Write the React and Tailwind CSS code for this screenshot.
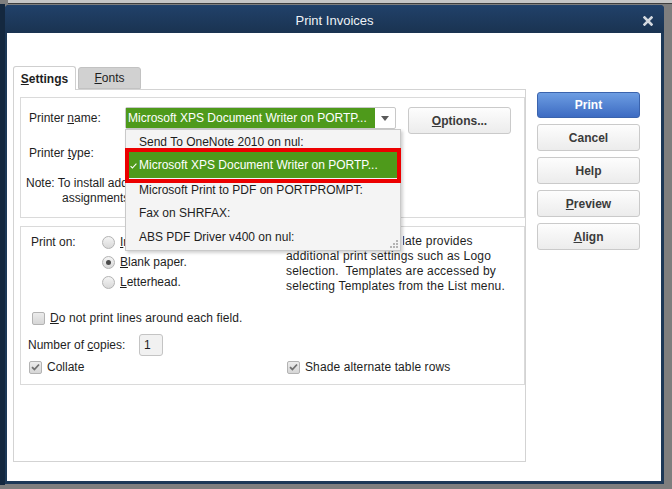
import React from "react";

function Radio({ checked, label, u, clip }) {
	return (
		<div className="flex items-center h-[20px]">
			<span className="w-[13px] h-[13px] rounded-full border border-[#b3b3b3] bg-gradient-to-b from-[#f4f4f4] to-[#d9d9d9] flex items-center justify-center">
				{checked && <span className="w-[5px] h-[5px] rounded-full bg-[#4a4a4a]" />}
			</span>
			<span className={clip ? "ml-[5px] w-[6px] overflow-hidden whitespace-nowrap" : "ml-[5px]"}>
				<span className="underline">{u}</span>
				{label}
			</span>
		</div>
	);
}

function Check({ checked }) {
	return (
		<span className="w-[13px] h-[13px] rounded-[2px] border border-[#b3b3b3] bg-gradient-to-b from-[#ececec] to-[#d6d6d6] flex items-center justify-center shrink-0">
			{checked && (
				<svg width="9" height="8" viewBox="0 0 9 8">
					<path d="M1 4.2 L3.4 6.5 L8 1.5" fill="none" stroke="#707070" strokeWidth="1.8" />
				</svg>
			)}
		</span>
	);
}

function SideButton({ children, primary }) {
	return (
		<button
			className={
				primary
					? "w-[103px] h-[26px] rounded-[3px] border border-[#3a63ad] bg-gradient-to-b from-[#6d9de2] to-[#3d6bc2] text-white font-bold text-[12px]"
					: "w-[103px] h-[27px] rounded-[3px] border border-[#cacaca] bg-gradient-to-b from-[#fdfdfd] to-[#ececec] text-[#3b3b3b] font-bold text-[12px]"
			}
		>
			{children}
		</button>
	);
}

const printers = [
	"Send To OneNote 2010 on nul:",
	"Microsoft XPS Document Writer on PORTP...",
	"Microsoft Print to PDF on PORTPROMPT:",
	"Fax on SHRFAX:",
	"ABS PDF Driver v400 on nul:",
];

export default function App() {
	return (
		<div className="w-[672px] h-[489px] bg-[#7e7e7e] overflow-hidden font-['Liberation_Sans',Arial,sans-serif] text-[12px] text-[#1e1e1e]">
			<div className="h-[4px] bg-[#c6c6c6] border-b border-[#3d3d3d] ml-[8px]" />
			<div className="flex">
				<div className="w-[5px] h-[481px] bg-[#14283f]" />
				{/* dialog */}
				<div className="mt-[1px] w-[659px] h-[479px] flex flex-col bg-[#1c3857] rounded-t-[4px] pr-[3px] pl-[2px] pb-[3px]">
					<div className="h-[28px] -ml-[2px] -mr-[3px] rounded-t-[4px] bg-gradient-to-b from-[#21416a] to-[#1a3351] relative flex items-center justify-center pt-[3px]">
						<span className="text-[13px] text-[#eef2f7]">Print Invoices</span>
						<svg className="absolute right-[11px] top-[11px]" width="10" height="10" viewBox="0 0 10 10">
							<path d="M1.5 1.5 L8.5 8.5 M8.5 1.5 L1.5 8.5" stroke="#d4d9df" strokeWidth="2.6" strokeLinecap="square" />
						</svg>
					</div>
					<div className="flex-1 bg-white flex items-start">
						{/* left column */}
						<div className="ml-[6px] w-[513px] pt-[33px]">
							<div className="flex h-[23px] items-start">
								<div className="w-[63px] h-[24px] border border-b-0 border-[#cfcfcf] bg-white rounded-t-[3px] flex items-center justify-center font-bold relative z-10">
									<span>
										<span className="underline">S</span>ettings
									</span>
								</div>
								<div className="ml-[2px] mt-[1px] w-[63px] h-[22px] border border-[#c2c2c2] bg-[#d1d1d1] rounded-t-[3px] flex items-center justify-center">
									<span>
										<span className="underline">F</span>onts
									</span>
								</div>
							</div>
							<div className="h-[373px] border border-[#d3d3d3] pl-[6px] pt-[7px]">
								{/* group 1 */}
								<div className="w-[505px] h-[121px] border border-[#dadada]">
									<div className="flex items-start mt-[9px] pl-[8px]">
										<div className="w-[96px] h-[22px] flex items-center">
											Printer <span className="underline ml-[3px]">n</span>ame:
										</div>
										<div className="relative w-[271px] h-[22px] border border-[#c8c8c8] rounded-[2px] bg-white flex">
											<div className="w-[249px] h-full bg-[#4e9a1b] text-white flex items-center pl-[2px] whitespace-nowrap overflow-hidden">
												Microsoft XPS Document Writer on PORTP...
											</div>
											<div className="flex-1 flex items-center justify-center">
												<svg width="8" height="5" viewBox="0 0 8 5">
													<path d="M0 0 H8 L4 5 Z" fill="#5a5a5a" />
												</svg>
											</div>
											{/* open list */}
											<div className="absolute left-[-1px] top-[21px] w-[276px] h-[122px] z-20 border border-[#c9c9c9] bg-[#f4f4f4] shadow-[2px_2px_3px_rgba(0,0,0,0.18)] pt-[1px]">
												{printers.map((p, i) => (
													<div
														key={p}
														className={
															i === 1
																? "relative h-[26px] ml-[1px] mr-[3px] bg-[#4e9a1b] text-white flex items-center pl-[12px] whitespace-nowrap"
																: i === 0
																? "h-[21.4px] flex items-center pl-[13px] pt-[1px] whitespace-nowrap"
																: "h-[23.4px] flex items-center pl-[13px] whitespace-nowrap"
														}
													>
														{i === 1 && (
															<svg className="absolute left-[3px] top-[11px]" width="7" height="6" viewBox="0 0 7 6">
																<path d="M0.6 3.2 L2.4 5 L6.4 0.6" fill="none" stroke="#fff" strokeWidth="1.1" />
															</svg>
														)}
														{p}
													</div>
												))}
												<svg className="absolute right-[2px] bottom-[2px]" width="9" height="9" viewBox="0 0 9 9">
													<g fill="#b4b4b4">
														<rect x="7" y="1" width="2" height="2" />
														<rect x="4" y="4" width="2" height="2" />
														<rect x="7" y="4" width="2" height="2" />
														<rect x="1" y="7" width="2" height="2" />
														<rect x="4" y="7" width="2" height="2" />
														<rect x="7" y="7" width="2" height="2" />
													</g>
												</svg>
												<div className="absolute left-[-1px] top-[18px] w-[276px] h-[35px] border-[4px] border-[#ec0000]" />
											</div>
										</div>
										<button className="ml-[12px] w-[103px] h-[27px] rounded-[3px] border border-[#cacaca] bg-gradient-to-b from-[#fdfdfd] to-[#ececec] text-[#3b3b3b] font-bold">
											<span className="underline">O</span>ptions...
										</button>
									</div>
									<div className="flex mt-[12px] pl-[8px] leading-[15px]">
										<div className="w-[97px]">
											Printer <span className="underline">t</span>ype:
										</div>
									</div>
									<div className="mt-[15px] ml-[5px] w-[99px] overflow-hidden leading-[15px] whitespace-nowrap">
										<div>Note: To install additional printers or to change port</div>
										<div className="pl-[36px]">assignments, use the Windows Control Panel.</div>
									</div>
								</div>
								{/* group 2 */}
								<div className="mt-[8px] w-[505px] h-[159px] border border-[#dadada]">
									<div className="flex h-[62px] mt-[5px]">
										<div className="w-[265px] flex">
											<div className="w-[81px] pl-[10px] h-[20px] flex items-center">Print on:</div>
											<div>
												<Radio clip u="I" label="ntuit Preprinted forms." />
												<Radio checked u="B" label="lank paper." />
												<Radio u="L" label="etterhead." />
											</div>
										</div>
										<div className="mt-[2px] leading-[15px] whitespace-pre tracking-[0.2px]">
											<div className="ml-[117px] w-[120px] overflow-hidden">
												<div className="-ml-[117px]">Note: The form Template provides</div>
											</div>
											<div>additional print settings such as Logo</div>
											<div>selection.  Templates are accessed by</div>
											<div>selecting Templates from the List menu.</div>
										</div>
									</div>
									<div className="flex items-center h-[14px] mt-[17px] pl-[11px]">
										<Check />
										<span className="ml-[5px] tracking-[0.1px]">
											<span className="underline">D</span>o not print lines around each field.
										</span>
									</div>
									<div className="flex items-center mt-[9px] pl-[7px]">
										<div className="w-[111px]">
											Number of <span className="underline">c</span>opies:
										</div>
										<div className="w-[24px] h-[22px] border border-[#c4c4c4] rounded-[3px] bg-[#f1f1f1] flex items-center pl-[4px]">
											1
										</div>
									</div>
									<div className="flex items-center h-[14px] mt-[4px] pl-[8px]">
										<div className="w-[258px] flex items-center">
											<Check checked />
											<span className="ml-[5px]">Collate</span>
										</div>
										<Check checked />
										<span className="ml-[5px] tracking-[0.1px]">Shade alternate table rows</span>
									</div>
								</div>
							</div>
						</div>
						{/* right column */}
						<div className="ml-[11px] pt-[59px] flex flex-col gap-[6px]">
							<SideButton primary>Print</SideButton>
							<SideButton>Cancel</SideButton>
							<SideButton>Help</SideButton>
							<SideButton>
								<span className="underline">P</span>review
							</SideButton>
							<SideButton>
								<span className="underline">A</span>lign
							</SideButton>
						</div>
					</div>
				</div>
			</div>
		</div>
	);
}
